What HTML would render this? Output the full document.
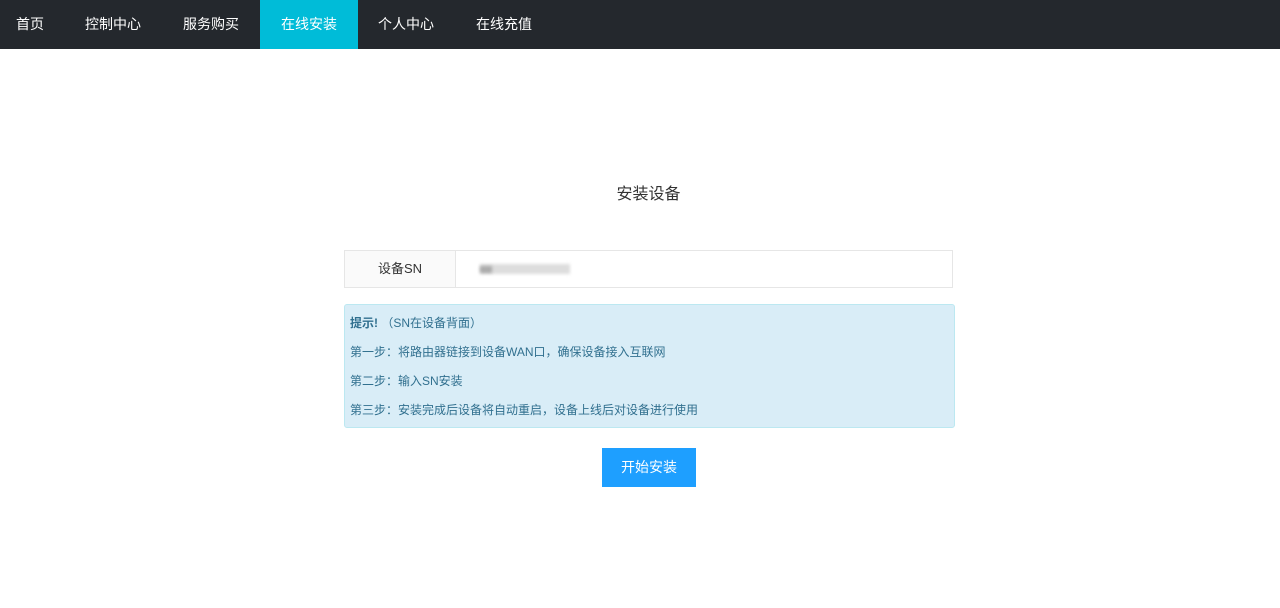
<!DOCTYPE html>
<html><head><meta charset="utf-8"><style>
*{margin:0;padding:0;box-sizing:border-box}
body{width:1280px;height:608px;background:#fff;font-family:"Liberation Sans","Noto Sans CJK SC",sans-serif;position:relative;overflow:hidden}
.nav{height:49px;background:#24282d;position:relative}
.nav a{position:absolute;top:0;height:49px;line-height:49px;color:#fff;font-size:14px;text-decoration:none}
.nav a.act{background:#00bcd8;width:98px;left:260px;text-align:center}
.title{position:absolute;top:180px;left:0;width:1297px;text-align:center;font-size:16px;color:#333}
.inp{position:absolute;left:344px;top:250px;width:609px;height:38px;border:1px solid #e6e6e6}
.inp .lab{position:absolute;left:0;top:0;width:111px;height:36px;background:#fafafa;border-right:1px solid #e6e6e6;text-align:center;line-height:36px;font-size:13px;color:#333}
.blur{position:absolute;top:13px;height:10px;background:#ccc;filter:blur(1.5px)}
.tip{position:absolute;left:344px;top:304px;width:611px;height:124px;background:#d9edf7;border:1px solid #bce8f1;border-radius:3px;color:#31708f;font-size:12px}
.tip p{position:absolute;left:5px}
.btn{position:absolute;left:602px;top:448px;width:94px;height:39px;background:#1e9fff;color:#fff;font-size:14px;text-align:center;line-height:39px}
</style></head><body>
<div class="nav">
<a style="left:16px">首页</a>
<a style="left:85px">控制中心</a>
<a style="left:183px">服务购买</a>
<a class="act">在线安装</a>
<a style="left:378px">个人中心</a>
<a style="left:476px">在线充值</a>
</div>
<div class="title">安装设备</div>
<div class="inp"><div class="lab">设备SN</div>
<div class="blur" style="left:135px;width:90px;background:#ddd"></div>
<div class="blur" style="left:135px;width:12px;top:15px;height:7px;background:#aaa"></div>
</div>
<div class="tip">
<p style="top:9px"><b>提示!</b> （SN在设备背面）</p>
<p style="top:38px">第一步：将路由器链接到设备WAN口，确保设备接入互联网</p>
<p style="top:67px">第二步：输入SN安装</p>
<p style="top:96px">第三步：安装完成后设备将自动重启，设备上线后对设备进行使用</p>
</div>
<div class="btn">开始安装</div>
</body></html>
